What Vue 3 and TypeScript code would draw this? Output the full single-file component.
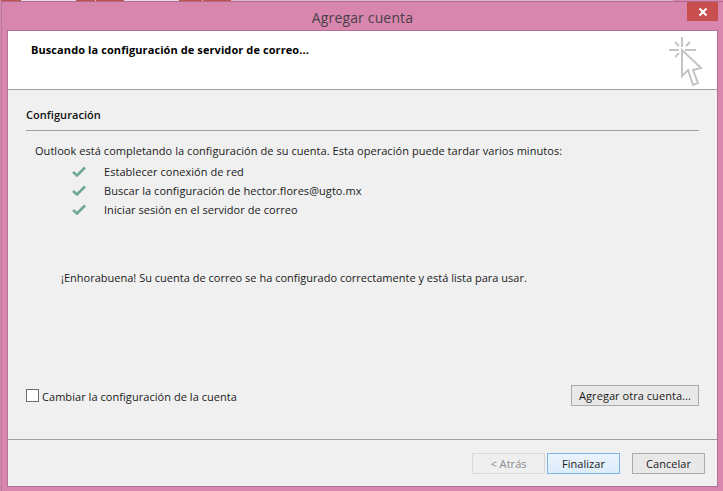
<script setup lang="ts">
const steps: string[] = [
  'Establecer conexión de red',
  'Buscar la configuración de hector.flores@ugto.mx',
  'Iniciar sesión en el servidor de correo',
]
const rays: string[] = [
  'M16 3V13', 'M3 16H13', 'M19 16H30', 'M9 8L13 12', 'M24 8L20 12', 'M9 23L13 19',
]
const stripes: { w: number; c: string }[] = [
  { w: 20, c: '#c0504a' }, { w: 26, c: '#e8dde0' }, { w: 29, c: '#e8dde0' }, { w: 19, c: '#c0504a' },
  { w: 1, c: '#e8c8c0' }, { w: 28, c: '#c0504a' }, { w: 26, c: '#e8dde0' }, { w: 29, c: '#e8dde0' },
  { w: 23, c: '#c0504a' }, { w: 1, c: '#e8c8c0' }, { w: 28, c: '#c0504a' }, { w: 442, c: '#d8b8c4' },
]
</script>

<template>
  <div class="screen">
    <div class="desk">
      <i v-for="(s, i) in stripes" :key="i" :style="{ width: s.w + 'px', background: s.c }"></i>
    </div>
    <div class="window">
      <div class="titlebar">
        <span class="title">Agregar cuenta</span>
        <button class="close" aria-label="Cerrar">
          <svg width="10" height="10" viewBox="0 0 10 10"><path d="M1.500 1.500L8.500 8.500M8.500 1.500L1.500 8.500" stroke="#fff" stroke-width="2" fill="none" /></svg>
        </button>
      </div>
      <div class="client">
        <header class="head">
          <h1>Buscando la configuración de servidor de correo...</h1>
          <svg class="cursor" width="46" height="54" viewBox="0 0 46 54" fill="none">
            <path v-for="d in rays" :key="d" :d="d" stroke="#c4c4c4" stroke-width="2" />
            <path d="M16 16V42L22 36L27 51L32 49L27 36L35 34Z" stroke="#c4c4c4" stroke-width="2" fill="#fff" />
          </svg>
        </header>
        <main class="body">
          <h2>Configuración</h2>
          <p class="intro">Outlook está completando la configuración de su cuenta. Esta operación puede tardar varios minutos:</p>
          <ul class="steps">
            <li v-for="s in steps" :key="s">
              <svg width="14" height="11" viewBox="0 0 14 11"><path d="M1 6L5 9.500L13 1.500" stroke="#6fa896" stroke-width="2.600" fill="none" /></svg>
              <span>{{ s }}</span>
            </li>
          </ul>
          <p class="done">¡Enhorabuena! Su cuenta de correo se ha configurado correctamente y está lista para usar.</p>
          <div class="actions">
            <label class="check"><i class="box"></i>Cambiar la configuración de la cuenta</label>
            <button class="btn other">Agregar otra cuenta...</button>
          </div>
        </main>
        <footer class="foot">
          <button class="btn off">&lt; Atrás</button>
          <button class="btn primary">Finalizar</button>
          <button class="btn cancel">Cancelar</button>
        </footer>
      </div>
    </div>
  </div>
</template>

<style>
html, body { margin: 0; background: #d886ae; overflow: hidden; }
</style>

<style scoped>
.screen { width: 723px; height: 491px; display: flex; flex-direction: column; font-family: "Open Sans", sans-serif; font-size: 11px; letter-spacing: 0.05px; color: #1a1a1a; overflow: hidden; }
.desk { height: 1px; display: flex; flex: none; padding-left: 1px; }
.desk i { display: block; height: 1px; }
.window { flex: 1; min-height: 0; margin-left: 1px; background: #d886ae; border-left: 1px solid #b8789a; border-top: 1px solid #b06c90; display: flex; flex-direction: column; padding: 0 6px 5px 6px; }
.titlebar { height: 29px; flex: none; display: flex; justify-content: center; align-items: center; position: relative; }
.title { font-size: 14px; letter-spacing: 0.15px; color: #4a4048; padding-top: 1px; }
.close { position: absolute; right: -1px; top: 0; width: 31px; height: 19px; background: #c94f4f; border: 0; padding: 0; display: flex; align-items: center; justify-content: center; }
.client { flex: 1; min-height: 0; display: flex; flex-direction: column; background: #f0f0f0; box-shadow: 0 0 0 1px #b0709a; }
.head { height: 58px; flex: none; background: #fff; border-bottom: 1px solid #a0a0a0; display: flex; justify-content: space-between; padding: 0 2px 0 23px; }
.head h1 { margin: 11px 0 0; font-size: 11px; letter-spacing: 0.09px; font-weight: 700; color: #000; line-height: 15px; }
.cursor { margin-top: 3px; margin-right: 3px; }
.body { flex: 1; min-height: 0; display: flex; flex-direction: column; padding: 0 18px 0 18px; }
.body h2 { margin: 17px 0 0; font-size: 11px; font-weight: 600; line-height: 15px; color: #111; padding-bottom: 8px; border-bottom: 1px solid #a0a0a0; }
.intro { margin: 12px 0 0 9px; line-height: 15px; }
.steps { list-style: none; margin: 4px 0 0; padding: 0 0 0 46px; }
.steps li { height: 19px; display: flex; align-items: center; }
.steps svg { flex: none; margin-right: 18px; }
.done { margin: 51px 0 0 35px; line-height: 15px; letter-spacing: 0.01px; }
.actions { margin-top: auto; margin-bottom: 33px; display: flex; justify-content: space-between; align-items: center; }
.check { display: flex; align-items: center; gap: 3px; line-height: 15px; padding-top: 2px; }
.box { width: 11px; height: 11px; border: 1px solid #707070; background: #fff; display: block; margin-top: -2px; }
.btn { font: inherit; letter-spacing: 0.05px; color: #1a1a1a; height: 21px; border: 1px solid #acacac; background: #e8e8e8; padding: 0; }
.other { width: 128px; }
.foot { height: 47px; flex: none; border-top: 1px solid #a0a0a0; display: flex; padding: 13px 12px 0 0; justify-content: flex-end; align-items: flex-start; box-sizing: border-box; }
.foot .btn { width: 73px; }
.off { color: #8a8a8a; border-color: #d9d9d9; background: #efefef; }
.primary { margin-left: 2px; background: linear-gradient(#ebf4fc, #dcecfc); border-color: #7eb4ea; }
.cancel { margin-left: 12px; }
</style>
